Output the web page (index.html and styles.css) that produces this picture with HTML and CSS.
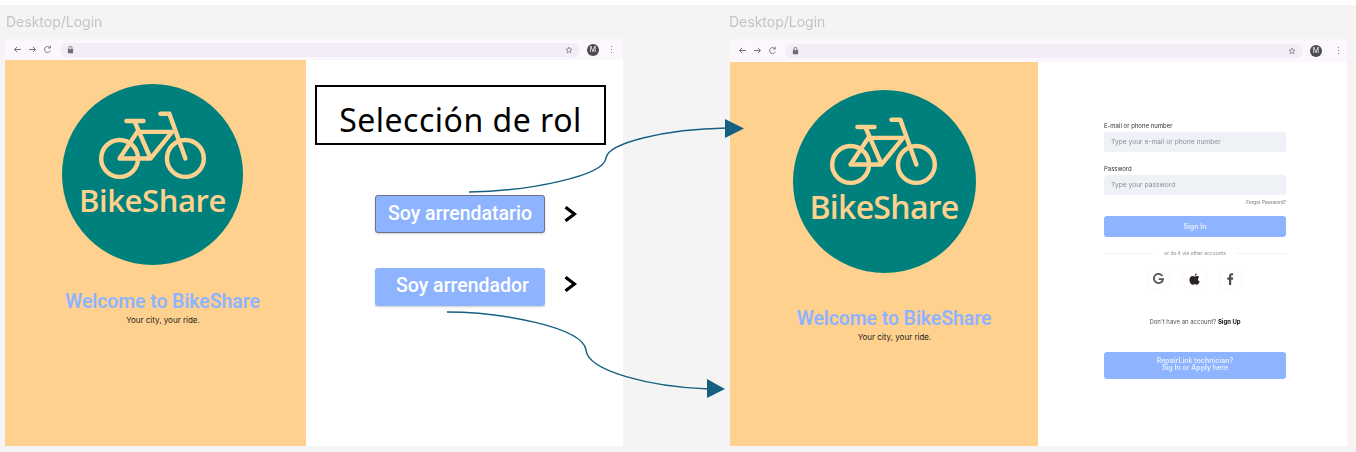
FILE: index.html
```html
<!DOCTYPE html>
<html lang="en">
<head>
    <meta charset="UTF-8">
    <meta name="viewport" content="width=device-width, initial-scale=1.0">
    <title>BikeShare role selection</title>
    <link rel="stylesheet" href="styles.css">
</head>
<body>
    <svg class="defs" width="0" height="0">
        <symbol id="bike" viewBox="140 110 340 220">
            <g fill="none" stroke="#ffd18e" stroke-width="13" stroke-linecap="round" stroke-linejoin="round">
                <circle cx="212" cy="258" r="54"/>
                <circle cx="405" cy="258" r="54"/>
                <path d="M232 148H282M256 150L303 258H212L264 180H366L303 258M332 127H358L405 258"/>
            </g>
        </symbol>
        <symbol id="back" viewBox="0 0 12 12">
            <path d="M10.5 6H2M5.5 2.5L2 6l3.5 3.5" fill="none" stroke="#6e6e70" stroke-width="1.3"/>
        </symbol>
        <symbol id="forward" viewBox="0 0 12 12">
            <path d="M1.500 6H10M6.500 2.500L10 6l-3.500 3.500" fill="none" stroke="#6e6e70" stroke-width="1.300"/>
        </symbol>
        <symbol id="reload" viewBox="0 0 12 12">
            <path d="M9.800 7.500A4 4 0 1 1 9 3.300M9.800 1v3H6.800" fill="none" stroke="#6e6e70" stroke-width="1.200"/>
        </symbol>
        <symbol id="lock" viewBox="0 0 12 12">
            <path d="M2.500 5.500h7v5.500h-7z" fill="#6e6e70"/>
            <path d="M4 5.500V3.800a2 2 0 0 1 4 0v1.700" fill="none" stroke="#6e6e70" stroke-width="1.200"/>
        </symbol>
        <symbol id="star" viewBox="0 0 12 12">
            <path d="M6 1.500l1.350 3 3.150.3-2.400 2.100.75 3.100L6 8.400 3.150 10l.75-3.100-2.400-2.100 3.150-.3z" fill="none" stroke="#6e6e70" stroke-width="1"/>
        </symbol>
        <symbol id="chevron" viewBox="0 0 14 16">
            <path d="M2.500 1.200L11.500 8l-9 6.800" fill="none" stroke="#000" stroke-width="3.200"/>
        </symbol>
    </svg>

    <main class="board">
        <section class="frame frame-role">
            <p class="frame-name">Desktop/Login</p>
            <div class="browser-bar">
                <svg class="bar-icon"><use href="#back"/></svg>
                <svg class="bar-icon"><use href="#forward"/></svg>
                <svg class="bar-icon"><use href="#reload"/></svg>
                <div class="url-pill">
                    <svg class="bar-icon"><use href="#lock"/></svg>
                    <svg class="bar-icon star"><use href="#star"/></svg>
                </div>
                <span class="avatar">M</span>
                <span class="kebab">⋮</span>
            </div>
            <div class="frame-body">
                <div class="brand">
                    <div class="logo">
                        <svg class="logo-bike"><use href="#bike"/></svg>
                        <span class="logo-name">BikeShare</span>
                    </div>
                    <h2 class="welcome">Welcome to BikeShare</h2>
                    <p class="tagline">Your city, your ride.</p>
                </div>
                <div class="role-panel">
                    <h1 class="role-title">Selección de rol</h1>
                    <div class="role-list">
                        <div class="role-row">
                            <button class="role-btn role-btn-active">Soy arrendatario</button>
                            <svg class="chevron"><use href="#chevron"/></svg>
                        </div>
                        <div class="role-row">
                            <button class="role-btn">Soy arrendador</button>
                            <svg class="chevron"><use href="#chevron"/></svg>
                        </div>
                    </div>
                </div>
            </div>
        </section>

        <section class="frame frame-login">
            <p class="frame-name">Desktop/Login</p>
            <div class="browser-bar">
                <svg class="bar-icon"><use href="#back"/></svg>
                <svg class="bar-icon"><use href="#forward"/></svg>
                <svg class="bar-icon"><use href="#reload"/></svg>
                <div class="url-pill">
                    <svg class="bar-icon"><use href="#lock"/></svg>
                    <svg class="bar-icon star"><use href="#star"/></svg>
                </div>
                <span class="avatar">M</span>
                <span class="kebab">⋮</span>
            </div>
            <div class="frame-body">
                <div class="brand">
                    <div class="logo">
                        <svg class="logo-bike"><use href="#bike"/></svg>
                        <span class="logo-name">BikeShare</span>
                    </div>
                    <h2 class="welcome">Welcome to BikeShare</h2>
                    <p class="tagline">Your city, your ride.</p>
                </div>
                <div class="login-panel">
                    <form class="login-form">
                        <label class="field-label">E-mail or phone number</label>
                        <div class="field">Type your e-mail or phone number</div>
                        <label class="field-label field-label-gap">Password</label>
                        <div class="field">Type your password</div>
                        <a class="forgot">Forgot Password?</a>
                        <div class="submit">Sign In</div>
                        <div class="divider"><span>or do it via other accounts</span></div>
                        <div class="socials">
                            <span class="social">
                                <svg width="11" height="11" viewBox="0 0 12 12"><path d="M10.200 3.200A5 5 0 1 0 11 6.600H6.200" fill="none" stroke="#555" stroke-width="2"/></svg>
                            </span>
                            <span class="social">
                                <svg width="11" height="12" viewBox="0 0 12 13"><path d="M8.500 0.500C8.600 1.900 7.500 3 6.200 3 6.100 1.700 7.200.6 8.500.500zM6.200 3.700c.8 0 1.500-.6 2.600-.6 1 0 1.900.5 2.400 1.300-2.100 1.200-1.700 4.100.5 4.900-.5 1.400-1.600 3.400-2.800 3.400-.9 0-1.300-.6-2.500-.6s-1.700.6-2.500.6C2.400 12.700.500 9.900.500 7.200c0-2.400 1.500-4 3.300-4 1 0 1.700.5 2.400.5z" fill="#2b2320"/></svg>
                            </span>
                            <span class="social">
                                <svg width="7" height="12" viewBox="0 0 7 12"><path d="M2 12V6.700H.3V4.600H2V3.200C2 1.300 3.100.3 4.700.3c.7 0 1.400.1 1.500.1v1.900H5.200c-.9 0-1 .4-1 1v1.300h2l-.3 2.100H4.200V12z" fill="#4b4b4b"/></svg>
                            </span>
                        </div>
                        <p class="signup">Don't have an account? <b>Sign Up</b></p>
                        <div class="submit submit-tall">RepairLink technician?<br>Sig In or Apply here</div>
                    </form>
                </div>
            </div>
        </section>

        <!-- connectors between the two screens -->
        <svg class="connectors" width="1356" height="447" viewBox="0 5 1356 447">
            <g fill="none" stroke="#156082" stroke-width="1.500">
                <path d="M469 192C530 191 604 176 606 158C608 143 665 129 727 128"/>
                <path d="M447 312C500 312 583 327 586 350C588 371 650 387 709 389"/>
            </g>
            <path d="M725 119L744 128.500 725 138z" fill="#156082"/>
            <path d="M707 379L725 389 707 398z" fill="#156082"/>
        </svg>
    </main>
</body>
</html>
```

FILE: styles.css
```css
html {
    background-color: #fff;
}

body {
    margin: 0;
    padding: 0;
    font-family: 'Inter', 'Liberation Sans', sans-serif;
    overflow: hidden;
}

.defs {
    display: block;
    height: 0;
}

.board {
    position: relative;
    display: flex;
    gap: 107px;
    height: 447px;
    margin-top: 5px;
    padding-left: 5px;
    background-color: #f4f4f4;
    box-sizing: border-box;
}

.frame {
    display: flex;
    flex-direction: column;
    height: 441px;
}

.frame-role {
    width: 618px;
}

.frame-login {
    width: 617px;
}

.frame-name {
    flex: none;
    height: 34px;
    margin: 0;
    padding-left: 1px;
    font-size: 14px;
    line-height: 33px;
    color: #c4c4c4;
    filter: blur(0.4px);
}

.frame-login .frame-name {
    margin-left: -2px;
}

/* browser chrome */
.browser-bar {
    flex: none;
    display: flex;
    align-items: center;
    gap: 6px;
    height: 21px;
    padding: 0 7px 0 8px;
    background-color: #fbf7fd;
    box-sizing: border-box;
    filter: blur(0.3px);
}

.frame-login .browser-bar {
    height: 23px;
    padding-right: 4px;
}

.bar-icon {
    flex: none;
    width: 9px;
    height: 9px;
}

.url-pill {
    flex: 1;
    display: flex;
    align-items: center;
    justify-content: space-between;
    height: 14px;
    margin: 0 1px 0 2px;
    padding: 0 7px 0 6px;
    background-color: #f2edf7;
    border-radius: 7px;
}

.star {
    width: 8px;
    height: 8px;
}

.avatar {
    flex: none;
    width: 12px;
    height: 12px;
    margin-right: 1px;
    border-radius: 50%;
    background-color: #4d4b52;
    color: #fff;
    font-size: 7px;
    line-height: 12px;
    text-align: center;
}

.frame-login .avatar {
    margin-right: 5px;
}

.kebab {
    flex: none;
    width: 10px;
    font-size: 9px;
    color: #777;
    text-align: center;
}

.frame-body {
    flex: 1;
    display: flex;
    background-color: #fff;
}

/* left brand column */
.brand {
    flex: none;
    display: flex;
    flex-direction: column;
    align-items: center;
    width: 301px;
    padding: 24px 6px 0 0;
    background-color: #ffd18e;
    box-sizing: border-box;
}

.frame-login .brand {
    width: 308px;
    padding: 28px 0 0;
}

.logo {
    display: flex;
    flex-direction: column;
    align-items: center;
    width: 181px;
    height: 181px;
    padding-top: 24px;
    border-radius: 50%;
    background-color: #00807c;
    box-sizing: border-box;
}

.frame-login .logo {
    width: 183px;
    height: 183px;
    padding-top: 24px;
}

.logo-bike {
    flex: none;
    width: 116px;
    height: 75px;
}

.logo-name {
    margin-top: -3px;
    font-family: 'Open Sans', sans-serif;
    font-size: 31px;
    font-weight: 650;
    line-height: 40px;
    letter-spacing: -0.4px;
    color: #ffd18e;
}

.frame-login .logo-name {
    margin-top: -2px;
    font-size: 32px;
    letter-spacing: -0.7px;
}

.welcome {
    margin: 26px 0 0 20px;
    font-family: 'Roboto', sans-serif;
    font-size: 19.500px;
    font-weight: 600;
    line-height: 22px;
    letter-spacing: -0.1px;
    color: #8fb4ff;
}

.frame-login .welcome {
    margin-top: 35px;
}

.tagline {
    margin: 2px 0 0 21px;
    font-size: 8px;
    line-height: 11px;
    color: #222;
}

/* role selection */
.role-panel {
    flex: 1;
    padding: 25px 0 0 9px;
}

.role-title {
    width: 291px;
    height: 60px;
    margin: 0;
    border: 2px solid #000;
    box-sizing: border-box;
    font-family: 'Noto Sans', sans-serif;
    font-size: 32px;
    font-weight: 400;
    line-height: 66px;
    letter-spacing: 0.5px;
    text-align: center;
    color: #000;
}

.role-list {
    display: flex;
    flex-direction: column;
    gap: 35px;
    margin: 50px 0 0 60px;
}

.role-row {
    display: flex;
    align-items: center;
    gap: 18px;
}

.role-btn {
    width: 170px;
    height: 38px;
    padding: 0 0 2px;
    border: none;
    border-radius: 3px;
    background-color: #8fb4ff;
    box-shadow: 0 1px 2px rgba(0, 0, 0, 0.2);
    font-family: 'Roboto', sans-serif;
    font-size: 19.500px;
    font-weight: 500;
    color: #fff;
}

.role-btn-active {
    border: 1px solid #68748c;
}

.role-row:last-child .role-btn {
    padding: 0 0 4px 5px;
}

.chevron {
    flex: none;
    width: 14px;
    height: 16px;
}

.role-row:last-child .chevron {
    margin-bottom: 6px;
}

/* login form */
.login-panel {
    flex: 1;
    padding: 60px 0 0 66px;
}

.login-form {
    display: flex;
    flex-direction: column;
    width: 182px;
    filter: blur(0.35px);
}

.field-label {
    font-size: 6px;
    line-height: 8px;
    color: #333;
}

.field-label-gap {
    margin-top: 13px;
}

.field {
    height: 20px;
    margin-top: 2px;
    padding-left: 7px;
    border-radius: 3px;
    background-color: #eef2f6;
    font-size: 6.700px;
    line-height: 20px;
    color: #8a8f98;
}

.forgot {
    margin-top: 4px;
    font-size: 4.700px;
    line-height: 6px;
    text-align: right;
    color: #777;
}

.submit {
    height: 21px;
    margin-top: 11px;
    border-radius: 3px;
    background-color: #8fb4ff;
    font-size: 7px;
    font-weight: 600;
    line-height: 21px;
    text-align: center;
    color: #e3ecff;
}

.submit-tall {
    height: 27px;
    margin-top: 26px;
    padding-top: 5px;
    box-sizing: border-box;
    line-height: 7px;
}

.divider {
    display: flex;
    align-items: center;
    gap: 10px;
    margin-top: 12px;
    font-size: 5px;
    line-height: 8px;
    color: #8a8f98;
    justify-content: center;
}

.divider::before,
.divider::after {
    content: '';
    flex: 1;
    border-top: 1px solid #f2f2f2;
}

.socials {
    display: flex;
    justify-content: center;
    gap: 13px;
    margin-top: 10px;
    padding-right: 2px;
}

.social {
    display: flex;
    align-items: center;
    justify-content: center;
    width: 23px;
    height: 23px;
    border-radius: 50%;
    box-shadow: 0 0 2px rgba(0, 0, 0, 0.08);
}

.signup {
    margin: 28px 0 0;
    font-size: 6px;
    line-height: 8px;
    text-align: center;
    color: #555;
}

.signup b {
    color: #111;
}

/* arrows sit over both frames */
.connectors {
    position: absolute;
    top: 0;
    left: 0;
    pointer-events: none;
}
```
